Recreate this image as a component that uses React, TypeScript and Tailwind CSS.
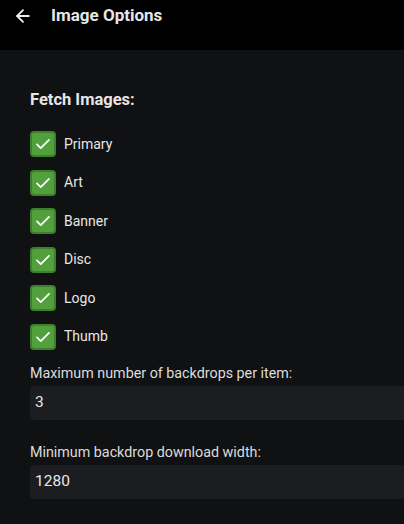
import { ArrowLeft } from 'lucide-react';

const fetchTypes = ['Primary', 'Art', 'Banner', 'Disc', 'Logo', 'Thumb'];

function CheckRow({ label }: { label: string }) {
  return (
    <div className="flex items-center h-[38.5px]">
      <div className="w-[26px] h-[26px] rounded-[4px] bg-[#52a03c] border-2 border-[#3e7f2e] flex items-center justify-center">
        <svg width="18" height="18" viewBox="0 0 24 24" fill="none" stroke="#ffffff" strokeWidth="2.3" strokeLinecap="round" strokeLinejoin="round">
          <path d="M4 12.5l5 5L20 6.5" />
        </svg>
      </div>
      <span className="ml-[8px] text-[14px] text-[#e6e6e6]">{label}</span>
    </div>
  );
}

function NumberField({ label, value }: { label: string; value: string }) {
  return (
    <div>
      <div className="text-[14.3px] text-[#dcdcdc] h-[20px] leading-[20px]">{label}</div>
      <div className="mt-[3px] w-[420px] h-[34px] rounded-[4px] bg-[#1c1d20] flex items-center pl-[5px] text-[15.5px] text-[#e8e8e8]">
        {value}
      </div>
    </div>
  );
}

export default function App() {
  return (
    <div className="w-[404px] h-[524px] overflow-hidden bg-[#101113] font-['Roboto',sans-serif]">
      <div className="h-[50px] bg-black">
        <div className="h-[32px] flex items-center">
          <ArrowLeft className="ml-[13px] text-[#eeeeee]" size={20} strokeWidth={2.2} />
          <span className="ml-[18px] text-[17px] font-bold text-[#e6e6e6]">Image Options</span>
        </div>
      </div>
      <div className="pl-[30px]">
        <div className="mt-[40px] text-[16.5px] font-bold text-[#e6e6e6] h-[20px] leading-[20px]">Fetch Images:</div>
        <div className="mt-[15px] flex flex-col">
          {fetchTypes.map((t) => (
            <CheckRow key={t} label={t} />
          ))}
        </div>
        <div className="mt-[7px]">
          <NumberField label="Maximum number of backdrops per item:" value="3" />
        </div>
        <div className="mt-[22px]">
          <NumberField label="Minimum backdrop download width:" value="1280" />
        </div>
      </div>
    </div>
  );
}
